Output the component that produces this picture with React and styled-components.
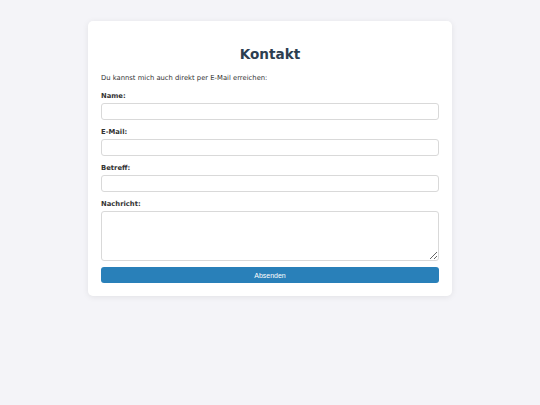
import React from 'react'
import styled, { createGlobalStyle } from 'styled-components'

const GlobalStyle = createGlobalStyle`
	html, body {
		margin: 0;
		padding: 0;
		background: #f4f4f8;
	}
	body {
		font-family: "DejaVu Sans", Verdana, sans-serif;
		color: #333;
	}
	* {
		box-sizing: border-box;
	}
`

export default function App() {
	const fields = [
		{ id: 'name', label: 'Name:', type: 'text' },
		{ id: 'email', label: 'E-Mail:', type: 'email' },
		{ id: 'betreff', label: 'Betreff:', type: 'text' },
	]

	return (
		<>
			<GlobalStyle />
			<Page>
				<Card>
					<Title>Kontakt</Title>
					<Intro>Du kannst mich auch direkt per E-Mail erreichen:</Intro>
					<form onSubmit={(e) => e.preventDefault()}>
						{fields.map((field) => (
							<Field key={field.id}>
								<Label htmlFor={field.id}>{field.label}</Label>
								<Input id={field.id} type={field.type} />
							</Field>
						))}
						<Field $last>
							<Label htmlFor="nachricht">Nachricht:</Label>
							<TextArea id="nachricht" />
						</Field>
						<Button type="submit">Absenden</Button>
					</form>
				</Card>
			</Page>
		</>
	)
}

const Page = styled.div`
	width: 100%;
	min-height: 405px;
	padding-top: 21px;
	display: flex;
	justify-content: center;
	align-items: flex-start;
`

const Card = styled.div`
	width: 364px;
	padding: 13px;
	background: #fff;
	border-radius: 5px;
	box-shadow: 0 1px 6px rgba(0, 0, 0, 0.08);
`

const Title = styled.h2`
	margin: 10px 0 8px;
	text-align: center;
	font-size: 13.6px;
	line-height: 21px;
	font-weight: bold;
	color: #2c3e50;
`

const Intro = styled.p`
	margin: 0 0 8px;
	font-size: 6.8px;
	line-height: 10px;
	color: #333;
`

const Field = styled.div`
	margin-bottom: ${(p) => (p.$last ? '6px' : '7px')};
`

const Label = styled.label`
	display: block;
	margin-bottom: 2px;
	font-size: 6.8px;
	line-height: 10px;
	font-weight: bold;
	color: #333;
`

const Input = styled.input`
	display: block;
	width: 100%;
	height: 17px;
	padding: 2px 4px;
	border: 1px solid #d9d9d9;
	border-radius: 3px;
	background: #fff;
	font-size: 7px;
	outline: none;
`

const TextArea = styled.textarea`
	display: block;
	width: 100%;
	height: 50px;
	padding: 2px 4px;
	border: 1px solid #d9d9d9;
	border-radius: 3px;
	background: #fff;
	font-size: 7px;
	outline: none;
`

const Button = styled.button`
	display: block;
	width: 100%;
	height: 16px;
	padding: 0;
	border: none;
	border-radius: 3px;
	background: #2980b9;
	color: #fff;
	font-family: "Liberation Sans", Arial, sans-serif;
	font-size: 7px;
	cursor: pointer;
`
